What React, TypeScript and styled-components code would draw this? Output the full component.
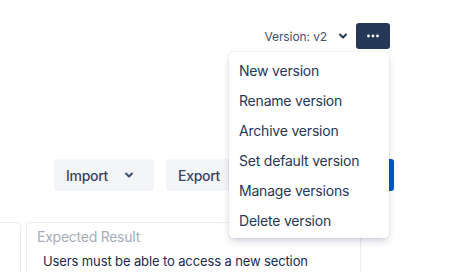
import React from "react";
import styled, { createGlobalStyle } from "styled-components";

const Global = createGlobalStyle`
  html, body {
    margin: 0;
    padding: 0;
    background: #ffffff;
    overflow: hidden;
  }
  body {
    font-family: Inter, "Noto Sans", "Liberation Sans", sans-serif;
    -webkit-font-smoothing: antialiased;
  }
`;

const S = {
  Page: styled.div`
    width: 456px;
    height: 272px;
    display: flex;
    flex-direction: column;
    overflow: hidden;
  `,
  TopBar: styled.div`
    display: flex;
    justify-content: flex-end;
    align-items: center;
    padding: 23px 66px 0 0;
    height: 26px;
  `,
  VersionSelect: styled.div`
    display: flex;
    align-items: center;
    gap: 12px;
    margin-right: 9px;
    font-size: 12px;
    letter-spacing: -0.1px;
    color: #42526e;
    cursor: pointer;
  `,
  MoreWrap: styled.div`
    position: relative;
  `,
  MoreButton: styled.button`
    width: 34px;
    height: 26px;
    border: none;
    border-radius: 3px;
    background: #253858;
    display: flex;
    align-items: center;
    justify-content: center;
    padding: 0;
  `,
  Menu: styled.div`
    position: absolute;
    top: calc(100% + 3px);
    right: 1px;
    width: 160px;
    padding: 3px 0;
    background: #ffffff;
    border-radius: 4px;
    box-shadow: 0 4px 8px -2px rgba(9, 30, 66, 0.25),
      0 0 1px rgba(9, 30, 66, 0.31);
    z-index: 10;
  `,
  MenuItem: styled.div`
    height: 30px;
    display: flex;
    align-items: center;
    padding: 0 10px;
    font-size: 14px;
    letter-spacing: -0.2px;
    color: #253858;
    white-space: nowrap;
  `,
  Toolbar: styled.div`
    display: flex;
    align-items: center;
    gap: 12px;
    margin-top: 110px;
    padding: 0 62px 0 54px;
  `,
  Button: styled.button<{ $primary?: boolean }>`
    height: 32px;
    border: none;
    border-radius: 3px;
    display: flex;
    align-items: center;
    gap: 17px;
    padding: 0 12px;
    font-family: inherit;
    font-size: 14px;
    font-weight: 500;
    letter-spacing: -0.3px;
    background: ${(p) => (p.$primary ? "#0052cc" : "#f4f5f7")};
    color: ${(p) => (p.$primary ? "#ffffff" : "#344563")};
    width: ${(p) => (p.$primary ? "116px" : "100px")};
  `,
  Cards: styled.div`
    display: grid;
    grid-template-columns: 19px 335px;
    gap: 7px;
    margin-top: 31px;
  `,
  Card: styled.div<{ $cut?: boolean }>`
    height: 90px;
    box-sizing: border-box;
    border: 1px solid #ebecf0;
    border-left: ${(p) => (p.$cut ? "none" : "1px solid #ebecf0")};
    border-radius: ${(p) => (p.$cut ? "0 4px 4px 0" : "4px")};
    padding: 6px 10px;
  `,
  CardLabel: styled.div`
    font-size: 14px;
    letter-spacing: -0.25px;
    color: #a5adba;
    line-height: 16px;
  `,
  CardText: styled.div`
    margin-top: 8px;
    padding-left: 6px;
    font-size: 13px;
    letter-spacing: -0.12px;
    color: #172b4d;
    line-height: 16px;
    white-space: nowrap;
  `,
};

const Chevron = ({ color = "#42526e" }: { color?: string }) => (
  <svg width="8" height="6" viewBox="8 9.5 8 6">
    <path
      fill={color}
      d="M8.292 10.293a1.009 1.009 0 0 0 0 1.419l2.939 2.965c.218.215.5.322.779.322s.556-.107.769-.322l2.93-2.955a1.01 1.01 0 0 0 0-1.419.987.987 0 0 0-1.406 0l-2.298 2.317-2.307-2.327a.99.99 0 0 0-1.406 0z"
    />
  </svg>
);

const Dots = () => (
  <svg width="16" height="16" viewBox="0 0 16 16">
    <circle cx="3.5" cy="8" r="1.4" fill="#ffffff" />
    <circle cx="8" cy="8" r="1.4" fill="#ffffff" />
    <circle cx="12.5" cy="8" r="1.4" fill="#ffffff" />
  </svg>
);

const menuItems = [
  "New version",
  "Rename version",
  "Archive version",
  "Set default version",
  "Manage versions",
  "Delete version",
];

const App = () => (
  <S.Page>
    <Global />
    <S.TopBar>
      <S.VersionSelect>
        <span>Version: v2</span>
        <Chevron color="#253858" />
      </S.VersionSelect>
      <S.MoreWrap>
        <S.MoreButton>
          <Dots />
        </S.MoreButton>
        <S.Menu>
          {menuItems.map((item) => (
            <S.MenuItem key={item}>{item}</S.MenuItem>
          ))}
        </S.Menu>
      </S.MoreWrap>
    </S.TopBar>
    <S.Toolbar>
      <S.Button>
        Import
        <Chevron />
      </S.Button>
      <S.Button>
        Export
        <Chevron />
      </S.Button>
      <S.Button $primary>Add step</S.Button>
    </S.Toolbar>
    <S.Cards>
      <S.Card $cut />
      <S.Card>
        <S.CardLabel>Expected Result</S.CardLabel>
        <S.CardText>Users must be able to access a new section</S.CardText>
      </S.Card>
    </S.Cards>
  </S.Page>
);

export default App;
